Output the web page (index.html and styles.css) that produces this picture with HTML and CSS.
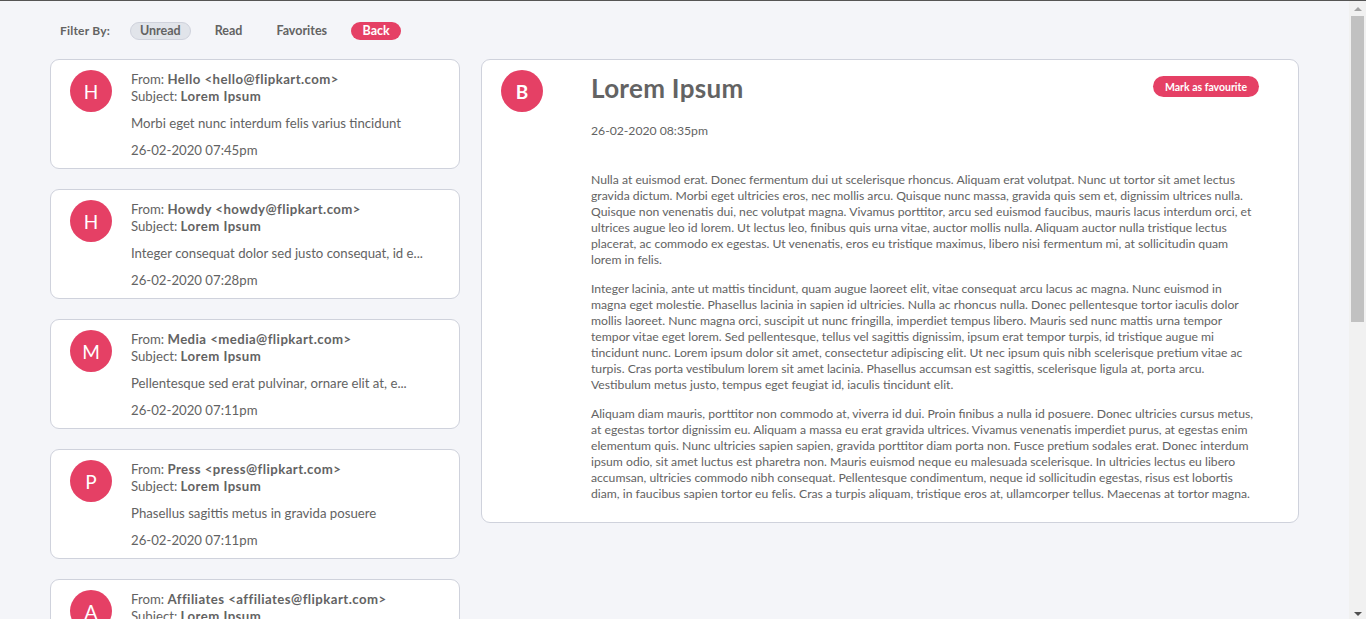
FILE: index.html
```html
<!DOCTYPE html>
<html lang="en">
<head>
<meta charset="utf-8">
<title>Email Client</title>
<link rel="stylesheet" href="styles.css">
</head>
<body>
<header class="filter-bar">
  <span class="filter-label">Filter By:</span>
  <button class="filter-btn active">Unread</button>
  <button class="filter-btn">Read</button>
  <button class="filter-btn">Favorites</button>
  <button class="filter-btn back">Back</button>
</header>
<main class="layout">
  <section class="email-list">
    <article class="email-card">
      <div class="avatar">H</div>
      <div class="email-info">
        <div class="line">From: <b>Hello &lt;hello@flipkart.com&gt;</b></div>
        <div class="line">Subject: <b>Lorem Ipsum</b></div>
        <div class="preview">Morbi eget nunc interdum felis varius tincidunt</div>
        <div class="date">26-02-2020 07:45pm</div>
      </div>
    </article>
    <article class="email-card">
      <div class="avatar">H</div>
      <div class="email-info">
        <div class="line">From: <b>Howdy &lt;howdy@flipkart.com&gt;</b></div>
        <div class="line">Subject: <b>Lorem Ipsum</b></div>
        <div class="preview">Integer consequat dolor sed justo consequat, id e...</div>
        <div class="date">26-02-2020 07:28pm</div>
      </div>
    </article>
    <article class="email-card">
      <div class="avatar">M</div>
      <div class="email-info">
        <div class="line">From: <b>Media &lt;media@flipkart.com&gt;</b></div>
        <div class="line">Subject: <b>Lorem Ipsum</b></div>
        <div class="preview">Pellentesque sed erat pulvinar, ornare elit at, e...</div>
        <div class="date">26-02-2020 07:11pm</div>
      </div>
    </article>
    <article class="email-card">
      <div class="avatar">P</div>
      <div class="email-info">
        <div class="line">From: <b>Press &lt;press@flipkart.com&gt;</b></div>
        <div class="line">Subject: <b>Lorem Ipsum</b></div>
        <div class="preview">Phasellus sagittis metus in gravida posuere</div>
        <div class="date">26-02-2020 07:11pm</div>
      </div>
    </article>
    <article class="email-card">
      <div class="avatar">A</div>
      <div class="email-info">
        <div class="line">From: <b>Affiliates &lt;affiliates@flipkart.com&gt;</b></div>
        <div class="line">Subject: <b>Lorem Ipsum</b></div>
        <div class="preview">Vivamus id tellus nec nisl gravida tempus</div>
        <div class="date">26-02-2020 06:58pm</div>
      </div>
    </article>
    <article class="email-card">
      <div class="avatar">B</div>
      <div class="email-info">
        <div class="line">From: <b>Bounce &lt;bounce@flipkart.com&gt;</b></div>
        <div class="line">Subject: <b>Lorem Ipsum</b></div>
        <div class="preview">Nulla at euismod erat. Donec fermentum dui ut s...</div>
        <div class="date">26-02-2020 08:35pm</div>
      </div>
    </article>
    <article class="email-card">
      <div class="avatar">S</div>
      <div class="email-info">
        <div class="line">From: <b>Support &lt;support@flipkart.com&gt;</b></div>
        <div class="line">Subject: <b>Lorem Ipsum</b></div>
        <div class="preview">Curabitur vel nisl at sem porta lacinia</div>
        <div class="date">26-02-2020 06:40pm</div>
      </div>
    </article>
    <article class="email-card">
      <div class="avatar">N</div>
      <div class="email-info">
        <div class="line">From: <b>News &lt;news@flipkart.com&gt;</b></div>
        <div class="line">Subject: <b>Lorem Ipsum</b></div>
        <div class="preview">Donec tristique velit eu ante sodales, in ac...</div>
        <div class="date">26-02-2020 06:22pm</div>
      </div>
    </article>
  </section>
  <section class="email-detail">
    <div class="avatar big">B</div>
    <div class="detail-body">
      <div class="detail-head">
        <h1 class="detail-title">Lorem Ipsum</h1>
        <button class="fav-btn">Mark as favourite</button>
      </div>
      <div class="detail-date">26-02-2020 08:35pm</div>
      <div class="detail-text">
        <p>Nulla at euismod erat. Donec fermentum dui ut scelerisque rhoncus. Aliquam erat volutpat. Nunc ut tortor sit amet lectus gravida dictum. Morbi eget ultricies eros, nec mollis arcu. Quisque nunc massa, gravida quis sem et, dignissim ultrices nulla. Quisque non venenatis dui, nec volutpat magna. Vivamus porttitor, arcu sed euismod faucibus, mauris lacus interdum orci, et ultrices augue leo id lorem. Ut lectus leo, finibus quis urna vitae, auctor mollis nulla. Aliquam auctor nulla tristique lectus placerat, ac commodo ex egestas. Ut venenatis, eros eu tristique maximus, libero nisi fermentum mi, at sollicitudin quam lorem in felis.</p>
        <p>Integer lacinia, ante ut mattis tincidunt, quam augue laoreet elit, vitae consequat arcu lacus ac magna. Nunc euismod in magna eget molestie. Phasellus lacinia in sapien id ultricies. Nulla ac rhoncus nulla. Donec pellentesque tortor iaculis dolor mollis laoreet. Nunc magna orci, suscipit ut nunc fringilla, imperdiet tempus libero. Mauris sed nunc mattis urna tempor tempor vitae eget lorem. Sed pellentesque, tellus vel sagittis dignissim, ipsum erat tempor turpis, id tristique augue mi tincidunt nunc. Lorem ipsum dolor sit amet, consectetur adipiscing elit. Ut nec ipsum quis nibh scelerisque pretium vitae ac turpis. Cras porta vestibulum lorem sit amet lacinia. Phasellus accumsan est sagittis, scelerisque ligula at, porta arcu. Vestibulum metus justo, tempus eget feugiat id, iaculis tincidunt elit.</p>
        <p>Aliquam diam mauris, porttitor non commodo at, viverra id dui. Proin finibus a nulla id posuere. Donec ultricies cursus metus, at egestas tortor dignissim eu. Aliquam a massa eu erat gravida ultrices. Vivamus venenatis imperdiet purus, at egestas enim elementum quis. Nunc ultricies sapien sapien, gravida porttitor diam porta non. Fusce pretium sodales erat. Donec interdum ipsum odio, sit amet luctus est pharetra non. Mauris euismod neque eu malesuada scelerisque. In ultricies lectus eu libero accumsan, ultricies commodo nibh consequat. Pellentesque condimentum, neque id sollicitudin egestas, risus est lobortis diam, in faucibus sapien tortor eu felis. Cras a turpis aliquam, tristique eros at, ullamcorper tellus. Maecenas at tortor magna.</p>
      </div>
    </div>
  </section>
</main>
<div class="scrollbar" aria-hidden="true">
  <span class="arrow up"></span>
  <span class="thumb"></span>
  <span class="arrow down"></span>
</div>
</body>
</html>
```
FILE: styles.css
```css
* { box-sizing: border-box; }
html, body { margin: 0; padding: 0; }
body {
  background: #f4f5f9;
  color: #636363;
  font-family: Lato, "Open Sans", sans-serif;
  border-top: 1px solid #555;
}
.filter-bar {
  display: flex;
  align-items: center;
  gap: 14px;
  padding: 20px 60px 0;
  height: 39px;
  margin-bottom: 19px;
}
.filter-label {
  font-size: 12px;
  font-weight: 700;
  margin-right: 6px;
  letter-spacing: 0.2px;
}
.filter-btn {
  font-family: inherit;
  font-size: 12.5px;
  font-weight: 700;
  color: #636363;
  background: transparent;
  border: 1px solid transparent;
  border-radius: 10px;
  height: 18px;
  padding: 0 9px;
  line-height: 16px;
}
.filter-btn.active {
  background: #e1e4ea;
  border-color: #cfd2dc;
}
.filter-btn.back {
  background: #e54065;
  color: #fff;
  padding: 0 10.5px;
}
.layout {
  display: grid;
  grid-template-columns: 410px 1fr;
  gap: 21px;
  align-items: start;
  padding: 0 67px 0 50px;
}
.email-list {
  display: flex;
  flex-direction: column;
  gap: 20px;
}
.email-card {
  display: flex;
  align-items: flex-start;
  background: #fff;
  border: 1px solid #cfd2dc;
  border-radius: 9px;
  padding: 10px 19px 9px;
  font-size: 13.2px;
}
.avatar {
  flex: none;
  width: 42px;
  height: 42px;
  border-radius: 50%;
  background: #e54065;
  color: #fff;
  font-size: 19px;
  display: flex;
  align-items: center;
  justify-content: center;
}
.avatar.big { font-weight: 700; }
.email-info {
  margin-left: 19px;
  padding-top: 1px;
  min-width: 0;
}
.line { line-height: 17px; white-space: nowrap; }
.line b { font-weight: 700; letter-spacing: 0.45px; }
.preview { margin-top: 10px; line-height: 17px; white-space: nowrap; }
.date { margin-top: 10px; line-height: 17px; }
.email-detail {
  display: flex;
  align-items: flex-start;
  background: #fff;
  border: 1px solid #cfd2dc;
  border-radius: 9px;
  padding: 10px 39px 20px 19px;
}
.detail-body {
  margin-left: 48px;
  flex: 1;
  min-width: 0;
}
.detail-head {
  display: flex;
  align-items: center;
  justify-content: space-between;
  padding-top: 2px;
}
.detail-title {
  margin: 0;
  font-size: 26px;
  font-weight: 700;
  line-height: 32px;
  letter-spacing: 0.3px;
}
.fav-btn {
  font-family: inherit;
  font-size: 10.5px;
  font-weight: 700;
  color: #fff;
  background: #e54065;
  border: none;
  border-radius: 11px;
  height: 21px;
  padding: 0 12px;
  margin-top: -3px;
}
.detail-date {
  margin-top: 19px;
  font-size: 12.2px;
  line-height: 16px;
}
.detail-text {
  margin-top: 33px;
  font-size: 12.2px;
  line-height: 16px;
}
.detail-text p { margin: 0 0 13px; }
.detail-text p:last-child { margin-bottom: 0; }
.scrollbar {
  position: fixed;
  top: 1px;
  right: 0;
  bottom: 0;
  width: 17px;
  background: #f1f1f1;
  display: flex;
  flex-direction: column;
  align-items: center;
}
.scrollbar .arrow {
  width: 0;
  height: 0;
  border-left: 4px solid transparent;
  border-right: 4px solid transparent;
  margin: 6px 0 5px;
}
.scrollbar .arrow.up { border-bottom: 4px solid #a3a3a3; }
.scrollbar .arrow.down {
  border-top: 4px solid #505050;
  margin-top: auto;
  margin-bottom: 3px;
}
.scrollbar .thumb {
  width: 13px;
  height: 306px;
  background: #c1c1c1;
}
```
